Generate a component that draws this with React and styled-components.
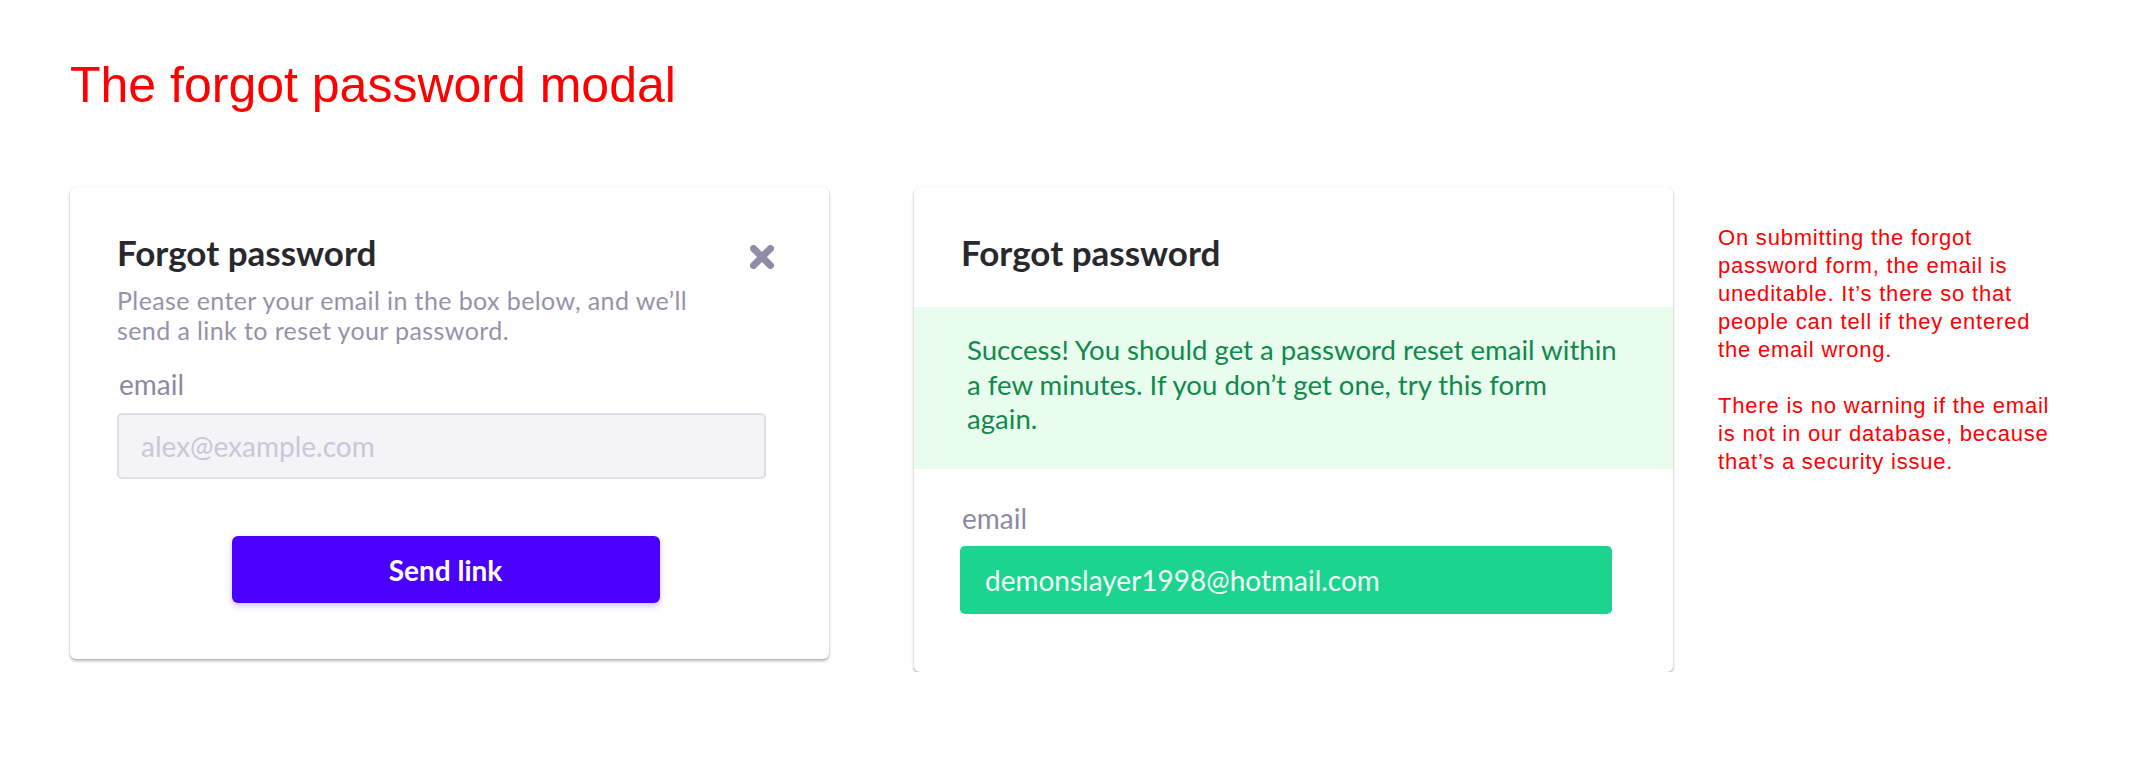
import React from 'react';
import styled, { createGlobalStyle } from 'styled-components';

const GlobalStyle = createGlobalStyle`
  body {
    margin: 0;
    background: #ffffff;
    font-family: "Lato", "Noto Sans", sans-serif;
  }
`;

const Page = styled.div`
  padding: 60px 0 0 70px;
`;

const PageTitle = styled.h1`
  margin: 0;
  font-family: "Liberation Sans", Arial, sans-serif;
  font-weight: 400;
  font-size: 50px;
  line-height: 50px;
  color: #ff0000;
`;

const Row = styled.div`
  display: flex;
  align-items: flex-start;
  gap: 45px;
  margin-top: 77px;
`;

const Cards = styled.div`
  display: flex;
  align-items: flex-start;
  gap: 85px;
`;

const Card = styled.div`
  width: 759px;
  box-sizing: border-box;
  background: #fff;
  border-radius: 6px;
  box-shadow: 0 2px 3px rgba(0, 0, 0, 0.3), 0 0 1px rgba(0, 0, 0, 0.12);
  padding: ${p => p.$pad};
`;

const Header = styled.div`
  display: flex;
  justify-content: space-between;
  align-items: flex-start;
  padding: ${p => (p.$inset ? '0 47px' : '0')};
`;

const Heading = styled.h2`
  margin: 0;
  font-size: 35px;
  line-height: 42px;
  font-weight: 700;
  color: #29292d;
`;

const CloseButton = styled.button`
  margin-top: 14px;
  width: 24px;
  height: 24px;
  padding: 0;
  border: none;
  background: none;
  cursor: pointer;
  display: flex;
`;

const Subtitle = styled.p`
  margin: 12px 0 0;
  font-size: 25px;
  line-height: 30px;
  letter-spacing: 0.4px;
  color: #9692aa;
`;

const Field = styled.div`
  display: flex;
  flex-direction: column;
  margin-top: ${p => p.$top}px;
  padding: ${p => (p.$inset ? '0 47px 0 46px' : '0')};
`;

const Label = styled.label`
  font-size: 28px;
  line-height: 32px;
  color: #8c8aa2;
  padding-left: 2px;
`;

const EmailInput = styled.input`
  box-sizing: border-box;
  margin-top: 13px;
  width: 649px;
  height: 66px;
  padding: 0 22px;
  border: 2px solid #dedde8;
  border-radius: 5px;
  background: #f4f4f7;
  font-family: inherit;
  font-size: 28px;
  color: #29292d;
  outline: none;
  &::placeholder {
    color: #c9c7d9;
  }
`;

const SentEmail = styled.input`
  box-sizing: border-box;
  margin-top: 12px;
  width: 652px;
  height: 68px;
  padding: 0 25px;
  border: none;
  border-radius: 5px;
  background: #1bd48f;
  font-family: inherit;
  font-size: 28px;
  color: #f2fff7;
  outline: none;
`;

const SendButton = styled.button`
  display: block;
  margin: 57px auto 0;
  width: 428px;
  height: 67px;
  border: none;
  border-radius: 6px;
  background: #4a00ff;
  box-shadow: 0 3px 6px rgba(74, 0, 255, 0.25);
  color: #fff;
  font-family: inherit;
  font-size: 28px;
  font-weight: 700;
  cursor: pointer;
`;

const SuccessBanner = styled.div`
  margin-top: 34px;
  padding: 26px 40px 32px 53px;
  background: #e9fdee;
  color: #108a4c;
  font-size: 27.6px;
  line-height: 34.5px;
`;

const Note = styled.p`
  margin: 37px 0 0;
  font-family: "Liberation Sans", Arial, sans-serif;
  font-size: 22px;
  line-height: 28px;
  letter-spacing: 0.8px;
  color: #ff0000;
  & + & {
    margin-top: 28px;
  }
`;

const NoteColumn = styled.div`
  display: flex;
  flex-direction: column;
`;

const CloseIcon = () => (
  <svg width="24" height="24" viewBox="0 0 24 24">
    <path d="M3.5 3.5 L20.5 20.5 M20.5 3.5 L3.5 20.5" stroke="#908ca6" strokeWidth="7" strokeLinecap="round" />
  </svg>
);

export default function App() {
  return (
    <Page>
      <GlobalStyle />
      <PageTitle>The forgot password modal</PageTitle>
      <Row>
        <Cards>
          <Card $pad="44px 55px 56px 47px">
            <Header>
              <Heading>Forgot password</Heading>
              <CloseButton aria-label="close">
                <CloseIcon />
              </CloseButton>
            </Header>
            <Subtitle>
              Please enter your email in the box below, and we’ll<br />
              send a link to reset your password.
            </Subtitle>
            <Field $top={23}>
              <Label>email</Label>
              <EmailInput placeholder="alex@example.com" />
            </Field>
            <SendButton>Send link</SendButton>
          </Card>

          <Card $pad="44px 0 58px 0">
            <Header $inset>
              <Heading>Forgot password</Heading>
            </Header>
            <SuccessBanner>
              Success! You should get a password reset email within<br />
              a few minutes. If you don’t get one, try this form<br />
              again.
            </SuccessBanner>
            <Field $top={33} $inset>
              <Label>email</Label>
              <SentEmail readOnly value="demonslayer1998@hotmail.com" />
            </Field>
          </Card>
        </Cards>

        <NoteColumn>
          <Note>
            On submitting the forgot<br />
            password form, the email is<br />
            uneditable. It’s there so that<br />
            people can tell if they entered<br />
            the email wrong.
          </Note>
          <Note>
            There is no warning if the email<br />
            is not in our database, because<br />
            that’s a security issue.
          </Note>
        </NoteColumn>
      </Row>
    </Page>
  );
}
